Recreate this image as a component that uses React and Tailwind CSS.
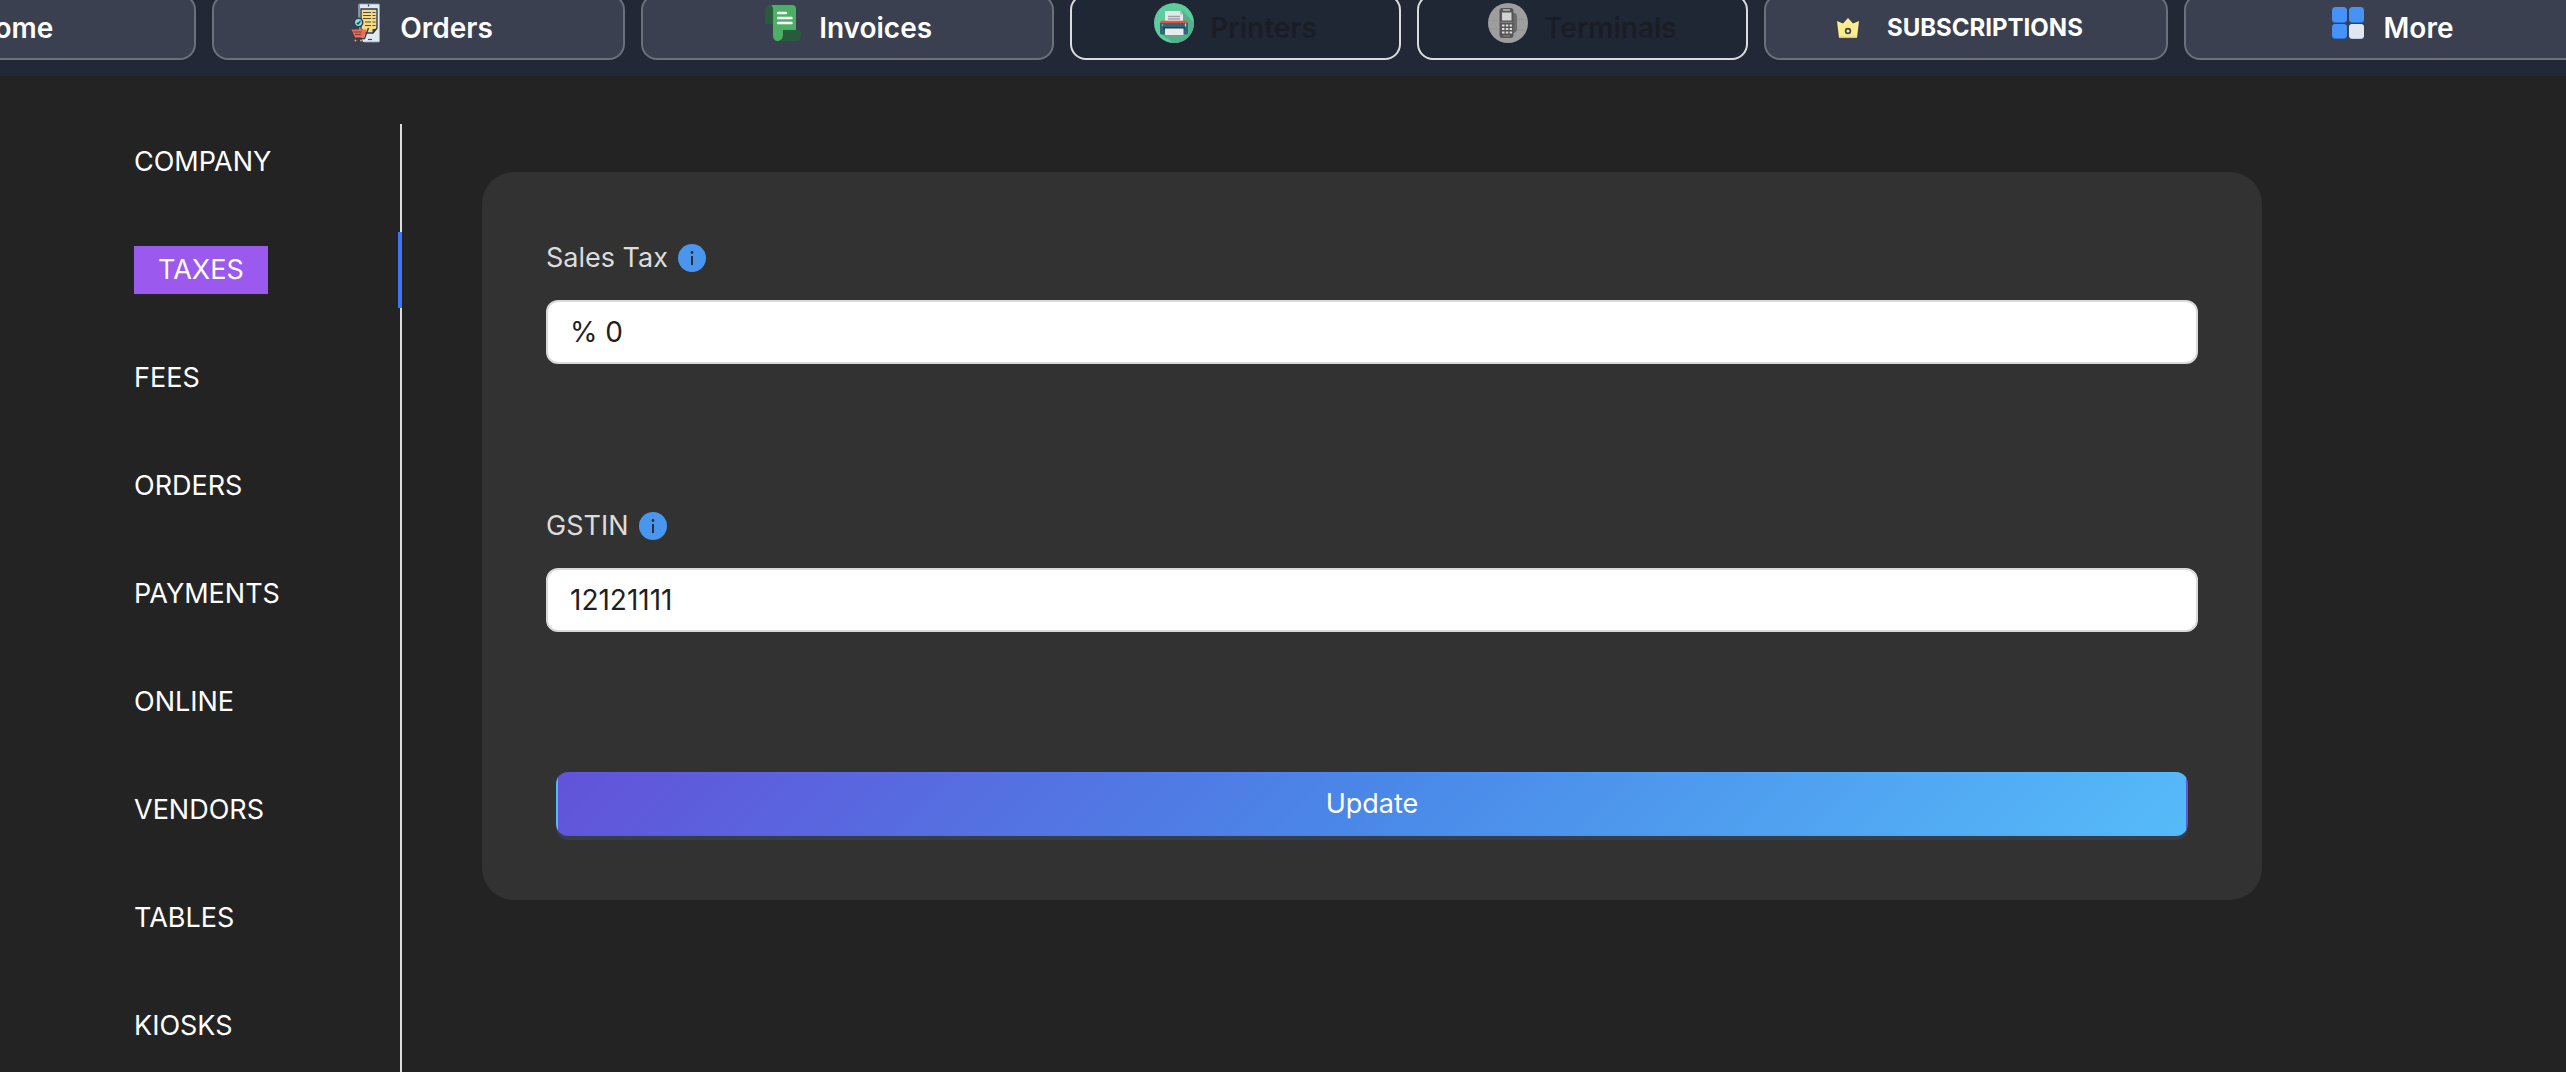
import { useState } from 'react'

function HomeIcon() {
  return (
    <svg viewBox="0 0 40 40" className="w-8 h-10" aria-hidden="true">
      <path d="M3 20 20 5l17 15h-5v15H8V20z" fill="#e0e7f1" />
      <path d="M16 24h8v11h-8z" fill="#4391f7" />
    </svg>
  )
}

function OrdersIcon() {
  return (
    <svg viewBox="0 0 40 40" className="w-10 h-10" aria-hidden="true">
      <path d="M15.500 1h19a1 1 0 0 1 1 1v36a1 1 0 0 1-1 1H19l-3.500-12z" fill="#dfe9f4" />
      <path d="M14.500 15V2q0-1 1-1h19q1 0 1 1v36q0 1-1 1H20" fill="none" stroke="#93a3b3" strokeWidth=".8" />
      <path d="M24.500 1.500v2" stroke="#2d3e50" strokeWidth="1.200" />
      <path d="M17 6h16v19l-4 5h-7l-5-4z" fill="#fad97f" stroke="#2d3e50" strokeWidth="1.400" />
      <path d="M28.500 31v-5H33z" fill="#2d3e50" />
      <path d="M19 9.500h8M28.500 9.500h3M19 12.500h8M28.500 12.500h3M19 15.500h8M28.500 15.500h3M21 19h6M28.500 19h3M21 22.500h6M28.500 22.500h3" stroke="#4a5048" strokeWidth="1.200" />
      <circle cx="14.500" cy="19.500" r="4.200" fill="#8bdde6" stroke="#2d3e50" strokeWidth="1.500" />
      <path d="m12.800 19.800 1.200 1.200 2.500-3" fill="none" stroke="#2d3e50" strokeWidth="1.300" />
      <path d="m24.500 25-4 10.500h-10" fill="none" stroke="#2d3e50" strokeWidth="1.400" />
      <path d="M7.500 26.500h15l-2.500 8H11z" fill="#ee6c55" />
      <path d="M9.500 29h8M11 31.500h6" stroke="#7d3a3a" strokeWidth="1" />
      <circle cx="11.500" cy="37.500" r="1" fill="#f5a05a" />
      <circle cx="17" cy="37.500" r="1" fill="#f5a05a" />
      <path d="M24 36.500h4" stroke="#3c4a5b" strokeWidth="1.200" />
    </svg>
  )
}

function InvoicesIcon() {
  return (
    <svg viewBox="0 0 40 40" className="w-10 h-10" aria-hidden="true">
      <path d="M8 2q-6 0-6 6v11q0 2 2 2h7V2z" fill="#285a3c" />
      <path d="M8 2h21q4 0 4 4v22H20v4q0 6-5 6t-5-6V7q0-4-2-5z" fill="#4caf66" />
      <path d="M20 27h16q2 0 2 2v3q0 6-6 6H15.500Q20 37 20 32z" fill="#285a3c" />
      <path d="M15 10h8M15 15h13.500M15 20h13.500" stroke="#fff" strokeWidth="2.400" strokeLinecap="round" />
    </svg>
  )
}

function PrintersIcon() {
  return (
    <svg viewBox="0 0 40 40" className="w-10 h-10" aria-hidden="true">
      <circle cx="20" cy="20" r="20" fill="#5fcc9d" />
      <path d="m29 8 11 12a20 20 0 0 1-20 20L8 32z" fill="#54b08b" />
      <path d="M11 8h15l3 3v8H11z" fill="#e4e6e8" />
      <path d="M26 8v3.500h3z" fill="#b4b9bd" />
      <path d="M14 13.500h12M14 16h12" stroke="#9c9ea1" strokeWidth="1.400" />
      <path d="M6 19h28v11q0 1.500-2 1.500H8q-2 0-2-1.500z" fill="#2d6878" />
      <path d="M7 17.800h26l1 2.200H6z" fill="#df5347" />
      <circle cx="8.500" cy="22" r=".8" fill="#7ec4cf" />
      <path d="M31.500 20.500v3" stroke="#b9dfe4" strokeWidth="1.200" />
      <path d="M9.500 24h21v3h-21z" fill="#1d4350" />
      <path d="M11 25.500h18.500V32H11z" fill="#e8eaec" />
    </svg>
  )
}

function TerminalsIcon() {
  return (
    <svg viewBox="0 0 40 40" className="w-10 h-10" aria-hidden="true">
      <circle cx="20" cy="20" r="20" fill="#9e9e9e" />
      <path d="M2 26h8M4 18h6M30 16h6M30 27h7" stroke="#929292" />
      <path d="M24 10h3q2 1 2 3v14q0 2-3 3h-2z" fill="#6b6b6b" />
      <rect x="11.500" y="5" width="14" height="30" rx="3" fill="#555" />
      <path d="M15 7h7" stroke="#bcbcbc" strokeWidth="1.500" />
      <rect x="14" y="9.500" width="9.500" height="8" fill="#d2d2d2" />
      <path d="M12.500 19.300h12" stroke="#8a8a8a" />
      <path d="M14 22.500h2.500m1.300 0h2.500m1.300 0h2.500M14 26h2.500m1.300 0h2.500m1.300 0h2.500M14 29.500h2.500m1.300 0h2.500m1.300 0h2.500" stroke="#dcdcdc" strokeWidth="2.200" />
      <path d="M15 33h7" stroke="#888" />
    </svg>
  )
}

function CrownIcon() {
  return (
    <svg viewBox="0 0 22 20" className="w-[22px] h-5" aria-hidden="true">
      <path d="m0 3 6 2.500L11 0l5 5.500L22 3l-2 17H2z" fill="#fdec8e" />
      <path d="M2 18.500h18V20H2z" fill="#d8cb83" />
      <circle cx="11" cy="13" r="2.400" fill="#fdec8e" stroke="#3a404f" strokeWidth="1.600" />
    </svg>
  )
}

function MoreIcon() {
  return (
    <svg viewBox="0 0 40 40" className="w-10 h-10" aria-hidden="true">
      <g fill="#2f6fd6">
        <rect x="4" y="5" width="15" height="15" rx="3.500" />
        <rect x="21" y="5" width="15" height="15" rx="3.500" />
        <rect x="4" y="21" width="15" height="15" rx="3.500" />
      </g>
      <rect x="21" y="21" width="15" height="15" rx="3.500" fill="#c3cfe3" />
      <g fill="#4593f8">
        <rect x="4" y="4" width="15" height="15" rx="3.500" />
        <rect x="21" y="4" width="15" height="15" rx="3.500" />
        <rect x="4" y="21" width="15" height="14" rx="3.500" />
      </g>
      <rect x="21" y="21" width="15" height="14" rx="3.500" fill="#e1e7f2" />
    </svg>
  )
}

const NAV = [
  { label: 'Home', Icon: HomeIcon, size: 'grow-[413]' },
  { label: 'Orders', Icon: OrdersIcon, size: 'grow-[413]' },
  { label: 'Invoices', Icon: InvoicesIcon, size: 'grow-[413]' },
  { label: 'Printers', Icon: PrintersIcon, size: 'grow-[330]', disabled: true },
  { label: 'Terminals', Icon: TerminalsIcon, size: 'grow-[330]', disabled: true },
  { label: 'SUBSCRIPTIONS', Icon: CrownIcon, size: 'grow-[404]', small: true },
  { label: 'More', Icon: MoreIcon, size: 'grow-[413]' },
]

const TABS = ['COMPANY', 'TAXES', 'FEES', 'ORDERS', 'PAYMENTS', 'ONLINE', 'VENDORS', 'TABLES', 'KIOSKS']

function NavButton({ label, Icon, size, disabled, small }) {
  const look = disabled
    ? 'bg-[#202734] border-[#dcdcdc] text-[#191d25]'
    : 'bg-[#3a404f] border-[#6b707c] text-white'
  return (
    <button
      type="button"
      disabled={disabled}
      className={`${size} basis-0 min-w-0 h-[66px] pt-0.5 rounded-2xl border-2 flex items-center justify-center ${look}`}>
      {small ? (
        <>
          <span className="mr-7"><Icon /></span>
          <span className="text-2xl font-bold mr-3">{label}</span>
        </>
      ) : (
        <>
          <span className="mr-4 mb-2.5"><Icon /></span>
          <span className="text-[28px] leading-10 font-semibold">{label}</span>
        </>
      )}
    </button>
  )
}

function Field({ id, label, value, onChange }) {
  return (
    <div>
      <div className="flex items-center gap-2.5 h-11">
        <label htmlFor={id} className="text-[27px] leading-[44px] text-[#dcdcdc]">{label}</label>
        <svg viewBox="0 0 28 28" className="w-7 h-7" aria-hidden="true">
          <circle cx="14" cy="14" r="14" fill="#4a96ee" />
          <circle cx="14" cy="8.500" r="1.400" fill="#2b2f36" />
          <path d="M14 12v9" stroke="#2b2f36" strokeWidth="2" />
        </svg>
      </div>
      <input
        id={id}
        type="text"
        value={value}
        onChange={e => onChange(e.target.value)}
        className="mt-5 w-full h-16 px-[22px] rounded-xl border-2 border-[#d9d9d9] bg-white text-[28px] text-[#1f1f1f] outline-none"
      />
    </div>
  )
}

export default function App() {
  const [tab, setTab] = useState('TAXES')
  const [tax, setTax] = useState('% 0')
  const [gstin, setGstin] = useState('12121111')

  return (
    <div className="h-screen flex flex-col overflow-hidden bg-[#232323] text-white font-[Inter,sans-serif]">
      <header className="shrink-0 overflow-hidden bg-[#222835]">
        <nav className="flex gap-4 -mt-1.5 pb-4 -ml-[217px] -mr-[31px]">
          {NAV.map(n => <NavButton key={n.label} {...n} />)}
        </nav>
      </header>

      <main className="flex-1 min-h-0 flex pt-12">
        <nav className="w-[402px] shrink-0 border-r-2 border-[#dcdcdc] flex flex-col gap-8">
          {TABS.map(t => (
            <button
              key={t}
              type="button"
              onClick={() => setTab(t)}
              className="relative shrink-0 h-[76px] pl-[134px] flex items-center text-[27px] text-left">
              {t === tab ? (
                <>
                  <span className="bg-[#9b59ee] px-6 h-12 leading-[48px]">{t}</span>
                  <span className="absolute -right-0.5 top-0 w-1 h-full bg-[#3b76fb]" />
                </>
              ) : t}
            </button>
          ))}
        </nav>

        <form
          onSubmit={e => e.preventDefault()}
          className="flex-1 self-start mt-12 ml-20 mr-[304px] px-16 pt-16 pb-16 rounded-[32px] bg-[#323232]">
          <Field id="sales-tax" label="Sales Tax" value={tax} onChange={setTax} />
          <div className="mt-[140px]">
            <Field id="gstin" label="GSTIN" value={gstin} onChange={setGstin} />
          </div>
          <div className="mt-[140px] px-2.5">
            <button
              type="submit"
              className="block w-full h-16 rounded-xl border-2 border-transparent text-[27px] bg-[linear-gradient(135deg,#6253d9,#4a88e8_50%,#56bbf9)] shadow-[0_4px_0_#343d4a]">
              Update
            </button>
          </div>
        </form>
      </main>
    </div>
  )
}
